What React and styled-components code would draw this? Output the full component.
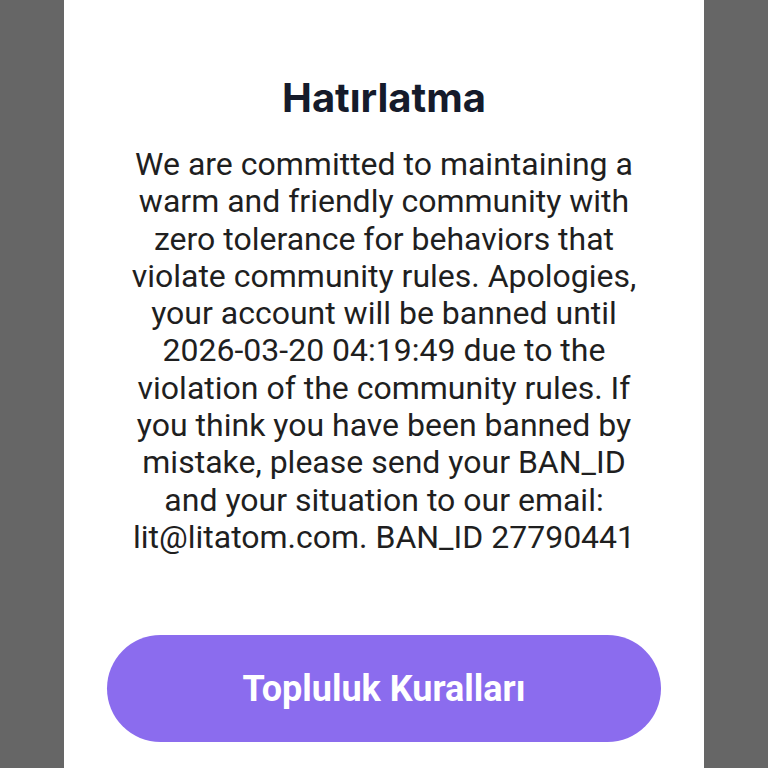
import React from "react";
import styled, { createGlobalStyle } from "styled-components";

const Global = createGlobalStyle`
  html, body { margin: 0; padding: 0; background: #666666; }
  #root { min-height: 768px; }
`;

const Page = styled.div`
  width: 768px;
  height: 768px;
  display: flex;
  justify-content: center;
  background: #666666;
  overflow: hidden;
`;

const Sheet = styled.div`
  width: 640px;
  background: #ffffff;
  display: flex;
  flex-direction: column;
  align-items: center;
  padding: 74px 43px 0;
  box-sizing: border-box;
`;

const Title = styled.h1`
  margin: 0;
  font-family: Inter, "Noto Sans", sans-serif;
  font-weight: 700;
  font-size: 40px;
  line-height: 48px;
  color: #151b2b;
`;

const Body = styled.p`
  margin: 24px 0 0;
  width: 520px;
  font-family: Roboto, "Noto Sans", sans-serif;
  font-size: 32px;
  line-height: 37.3px;
  color: #1f1f1f;
  text-align: center;
`;

const Button = styled.button`
  margin-top: 79px;
  width: 554px;
  height: 107px;
  border: none;
  border-radius: 54px;
  background: #8b6cee;
  color: #ffffff;
  font-family: Roboto, "Noto Sans", sans-serif;
  font-weight: 700;
  font-size: 36px;
  flex-shrink: 0;
`;

export default function App() {
  return (
    <Page>
      <Global />
      <Sheet>
        <Title>Hatırlatma</Title>
        <Body>
          We are committed to maintaining a warm and friendly community with zero tolerance for behaviors that violate community rules. Apologies, your account will be banned until 2026-03-20 04:19:49 due to the violation of the community rules. If you think you have been banned by mistake, please send your BAN_ID and your situation to our email: lit@litatom.com. BAN_ID 27790441
        </Body>
        <Button>Topluluk Kuralları</Button>
      </Sheet>
    </Page>
  );
}
